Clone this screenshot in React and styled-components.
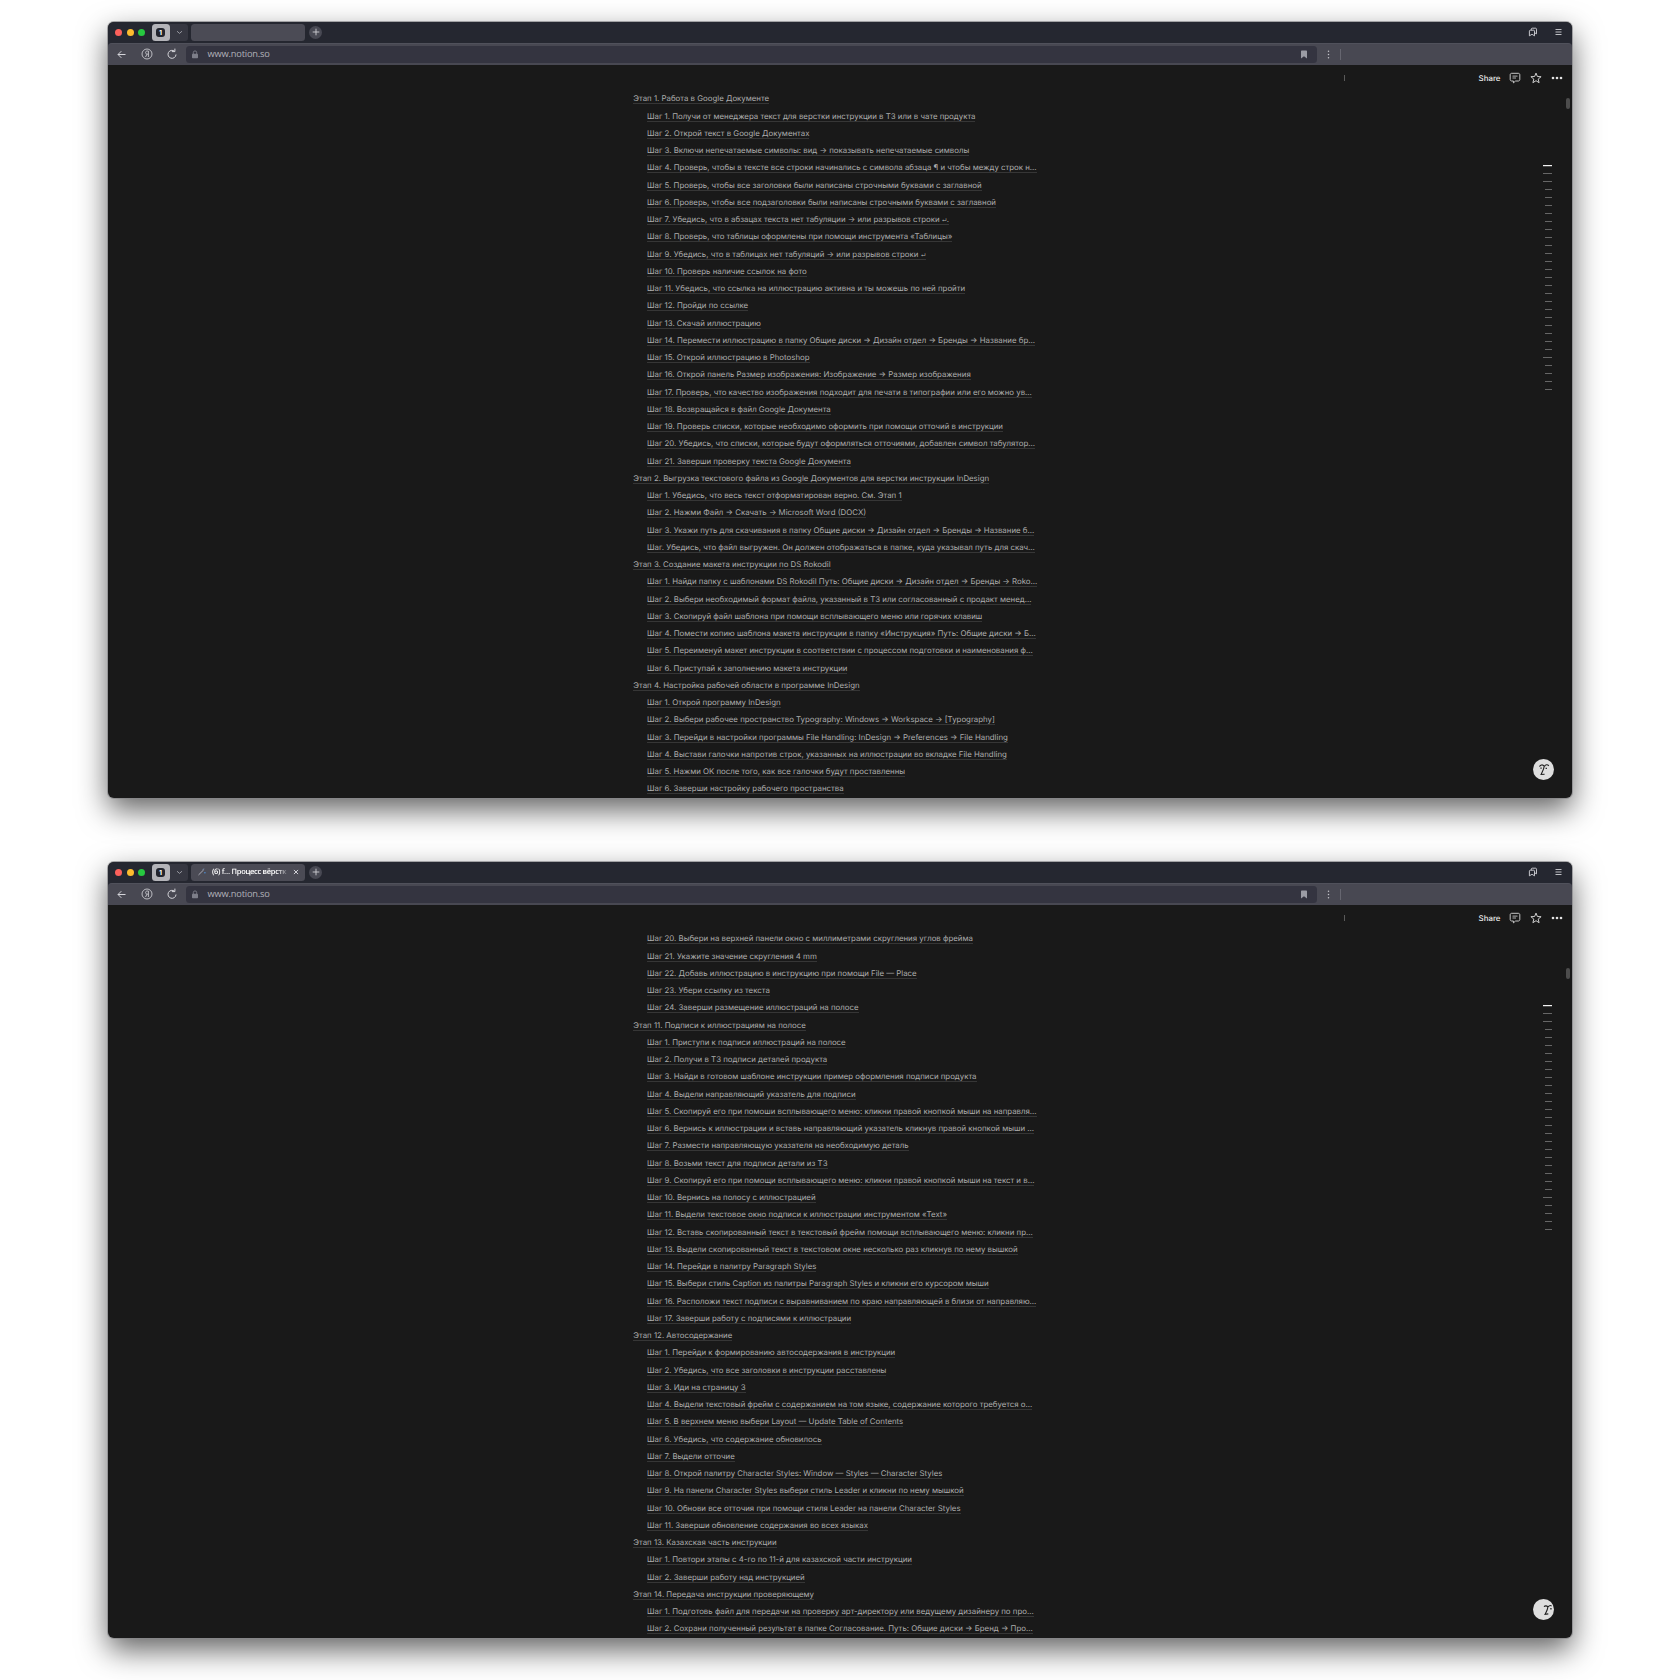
import styled, { createGlobalStyle } from 'styled-components';

const GlobalStyle = createGlobalStyle`
  *,
  *::before,
  *::after {
    box-sizing: border-box;
  }

  html,
  body {
    margin: 0;
    background-color: #fff;
  }

  svg {
    display: block;
  }
`;

const Page = styled.main`
  display: flex;
  flex-direction: column;
  align-items: center;
  gap: 64px;
  width: 1680px;
  height: 1680px;
  padding-top: 22px;
  overflow: hidden;
  font-family: Inter, 'Liberation Sans', sans-serif;
  text-rendering: geometricPrecision;
`;

const Window = styled.article`
  position: relative;
  flex: none;
  display: flex;
  flex-direction: column;
  width: 1464px;
  height: 776px;
  border-radius: 6px;
  background-color: #191919;
  box-shadow: 0 0 0 1px rgba(135, 135, 138, 0.7),
    0 12px 30px rgba(0, 0, 0, 0.62);
`;

const TabBar = styled.header`
  display: flex;
  align-items: center;
  height: 20.5px;
  padding: 0 10px 0 7px;
  border-radius: 6px 6px 0 0;
  background-color: #252730;
`;

const Lights = styled.div`
  display: flex;
  gap: 4.5px;
`;

const Light = styled.span`
  width: 7px;
  height: 7px;
  border-radius: 50%;
  background-color: ${(props) => props.$color};
`;

const Group = styled.div`
  display: flex;
  align-items: center;
  width: 36px;
  height: 17px;
  margin-left: 6.5px;
  border-radius: 3px;
  background-color: #363741;
`;

const GroupBadge = styled.div`
  display: grid;
  place-items: center;
  width: 18px;
  height: 17px;
  margin-right: 6px;
  border-radius: 3.5px;
  background-color: #b4b4b9;
`;

const GroupCount = styled.span`
  display: grid;
  place-items: center;
  width: 9.5px;
  height: 9.5px;
  border-radius: 3px;
  background-color: #23252e;
  color: #fff;
  font: 700 7px/9px Inter, sans-serif;
`;

const Tab = styled.div`
  display: flex;
  align-items: center;
  width: 114px;
  height: 16.5px;
  margin-left: 3.5px;
  padding: 0 6px 0 7px;
  border-radius: 3.5px;
  background-color: #4b4b55;
`;

const TabTitle = styled.span`
  width: 79px;
  margin: 0 3px 0 6px;
  white-space: nowrap;
  color: #fff;
  font: 600 7.5px/14px 'Open Sans', sans-serif;
  letter-spacing: -0.3px;
  mask-image: linear-gradient(to right, #000 84%, transparent 99%);
`;

const NewTab = styled.div`
  display: grid;
  place-items: center;
  width: 13px;
  height: 13px;
  margin-left: 4px;
  border-radius: 50%;
  background-color: #484953;
`;

const TabBarTools = styled.div`
  display: flex;
  align-items: center;
  gap: 17px;
  margin-left: auto;
`;

const Toolbar = styled.div`
  display: flex;
  align-items: center;
  height: 22.5px;
  padding-left: 8px;
  border-top: 1px solid #50515b;
  border-radius: 4px 4px 0 0;
  background-color: #484852;
`;

const ToolbarWrap = styled.div`
  background-color: #252730;
`;

const NavButtons = styled.div`
  display: flex;
  align-items: center;
  gap: 13.5px;
  width: 70px;
`;

const Address = styled.div`
  display: flex;
  align-items: center;
  width: 1131px;
  height: 17.5px;
  padding: 0 9px 0 5px;
  border-radius: 3.5px;
  background-color: #343440;
`;

const Url = styled.span`
  margin-left: 8.5px;
  color: #b2b3ba;
  font: 400 9.3px/16px 'Open Sans', sans-serif;
  letter-spacing: -0.2px;
`;

const Bookmark = styled.div`
  margin-left: auto;
`;

const MenuDots = styled.div`
  display: flex;
  align-items: center;
  gap: 10px;
  margin-left: 10px;
`;

const Rule = styled.span`
  width: 1px;
  height: ${(props) => props.$height}px;
  background-color: ${(props) => props.$color};
`;

const Content = styled.section`
  flex: 1;
  min-height: 0;
  overflow: hidden;
  border-radius: 0 0 6px 6px;
`;

const PageBar = styled.div`
  display: flex;
  align-items: center;
  height: 25.2px;
  padding-right: 9.5px;
`;

const PageBarRule = styled.div`
  margin-left: 1236px;
`;

const PageActions = styled.div`
  display: flex;
  align-items: center;
  gap: 8.7px;
  margin-left: auto;
`;

const Share = styled.span`
  color: #e8e8e8;
  font-size: 7.9px;
  font-weight: 500;
  line-height: 12px;
`;

const Contents = styled.ul`
  width: 406px;
  margin: 0 0 0 525.3px;
  padding: 0;
  list-style: none;
`;

const Item = styled.li`
  display: flex;
  align-items: center;
  height: 17.26px;
  padding-left: ${(props) => (props.$level === 1 ? 0 : 13.7)}px;
`;

const ItemText = styled.span`
  height: 11px;
  border-bottom: 1px solid #363636;
  white-space: nowrap;
  color: #adadad;
  font-size: 7.85px;
  line-height: 10px;
`;

const Return = styled.span`
  font-size: 5px;
  font-weight: 600;
  line-height: 0;
`;

const Scrollbar = styled.span`
  position: absolute;
  top: ${(props) => props.$top}px;
  right: 2px;
  width: 4px;
  height: 11px;
  border-radius: 2px;
  background-color: #4d4d4d;
`;

const Outline = styled.div`
  position: absolute;
  top: 143px;
  right: 20px;
  display: flex;
  flex-direction: column;
  align-items: flex-end;
  gap: 7px;
`;

const OutlineMark = styled.span`
  width: ${(props) => (props.$wide ? 9.5 : 7)}px;
  height: 1px;
  background-color: ${(props) => (props.$active ? '#f2f2f2' : '#666')};
  box-shadow: ${(props) =>
    props.$active ? '0 0.5px 0 rgba(242, 242, 242, 0.45)' : 'none'};
`;

const Assistant = styled.div`
  position: absolute;
  right: 18px;
  bottom: 18px;
  display: grid;
  place-items: center;
  width: 21px;
  height: 21px;
  border-radius: 50%;
  background-color: #dedede;
`;

const firstPage = [
  'Этап 1. Работа в Google Документе',
  'Шаг 1. Получи от менеджера текст для верстки инструкции в ТЗ или в чате продукта',
  'Шаг 2. Открой текст в Google Документах',
  'Шаг 3. Включи непечатаемые символы: вид → показывать непечатаемые символы',
  'Шаг 4. Проверь, чтобы в тексте все строки начинались с символа абзаца ¶ и чтобы между строк н…',
  'Шаг 5. Проверь, чтобы все заголовки были написаны строчными буквами с заглавной',
  'Шаг 6. Проверь, чтобы все подзаголовки были написаны строчными буквами с заглавной',
  'Шаг 7. Убедись, что в абзацах текста нет табуляции → или разрывов строки ↵.',
  'Шаг 8. Проверь, что таблицы оформлены при помощи инструмента «Таблицы»',
  'Шаг 9. Убедись, что в таблицах нет табуляций → или разрывов строки ↵',
  'Шаг 10. Проверь наличие ссылок на фото',
  'Шаг 11. Убедись, что ссылка на иллюстрацию активна и ты можешь по ней пройти',
  'Шаг 12. Пройди по ссылке',
  'Шаг 13. Скачай иллюстрацию',
  'Шаг 14. Перемести иллюстрацию в папку Общие диски → Дизайн отдел → Бренды → Название бр…',
  'Шаг 15. Открой иллюстрацию в Photoshop',
  'Шаг 16. Открой панель Размер изображения: Изображение → Размер изображения',
  'Шаг 17. Проверь, что качество изображения подходит для печати в типографии или его можно ув…',
  'Шаг 18. Возвращайся в файл Google Документа',
  'Шаг 19. Проверь списки, которые необходимо оформить при помощи отточий в инструкции',
  'Шаг 20. Убедись, что списки, которые будут оформляться отточиями, добавлен символ табулятор…',
  'Шаг 21. Заверши проверку текста Google Документа',
  'Этап 2. Выгрузка текстового файла из Google Документов для верстки инструкции InDesign',
  'Шаг 1. Убедись, что весь текст отформатирован верно. См. Этап 1',
  'Шаг 2. Нажми Файл → Скачать → Microsoft Word (DOCX)',
  'Шаг 3. Укажи путь для скачивания в папку Общие диски → Дизайн отдел → Бренды → Название б…',
  'Шаг. Убедись, что файл выгружен. Он должен отображаться в папке, куда указывал путь для скач…',
  'Этап 3. Создание макета инструкции по DS Rokodil',
  'Шаг 1. Найди папку с шаблонами DS Rokodil Путь: Общие диски → Дизайн отдел → Бренды → Roko…',
  'Шаг 2. Выбери необходимый формат файла, указанный в ТЗ или согласованный с продакт менед…',
  'Шаг 3. Скопируй файл шаблона при помощи всплывающего меню или горячих клавиш',
  'Шаг 4. Помести копию шаблона макета инструкции в папку «Инструкция» Путь: Общие диски → Б…',
  'Шаг 5. Переименуй макет инструкции в соответствии с процессом подготовки и наименования ф…',
  'Шаг 6. Приступай к заполнению макета инструкции',
  'Этап 4. Настройка рабочей области в программе InDesign',
  'Шаг 1. Открой программу InDesign',
  'Шаг 2. Выбери рабочее пространство Typography: Windows → Workspace → [Typography]',
  'Шаг 3. Перейди в настройки программы File Handling: InDesign → Preferences → File Handling',
  'Шаг 4. Выстави галочки напротив строк, указанных на иллюстрации во вкладке File Handling',
  'Шаг 5. Нажми ОК после того, как все галочки будут проставленны',
  'Шаг 6. Заверши настройку рабочего пространства',
];

const secondPage = [
  'Шаг 20. Выбери на верхней панели окно с миллиметрами скругления углов фрейма',
  'Шаг 21. Укажите значение скругления 4 mm',
  'Шаг 22. Добавь иллюстрацию в инструкцию при помощи File — Place',
  'Шаг 23. Убери ссылку из текста',
  'Шаг 24. Заверши размещение иллюстраций на полосе',
  'Этап 11. Подписи к иллюстрациям на полосе',
  'Шаг 1. Приступи к подписи иллюстраций на полосе',
  'Шаг 2. Получи в ТЗ подписи деталей продукта',
  'Шаг 3. Найди в готовом шаблоне инструкции пример оформления подписи продукта',
  'Шаг 4. Выдели направляющий указатель для подписи',
  'Шаг 5. Скопируй его при помоши всплывающего меню: кликни правой кнопкой мыши на направля…',
  'Шаг 6. Вернись к иллюстрации и вставь направляющий указатель кликнув правой кнопкой мыши …',
  'Шаг 7. Размести направляющую указателя на необходимую деталь',
  'Шаг 8. Возьми текст для подписи детали из ТЗ',
  'Шаг 9. Скопируй его при помощи всплывающего меню: кликни правой кнопкой мыши на текст и в…',
  'Шаг 10. Вернись на полосу с иллюстрацией',
  'Шаг 11. Выдели текстовое окно подписи к иллюстрации инструментом «Text»',
  'Шаг 12. Вставь скопированный текст в текстовый фрейм помощи всплывающего меню: кликни пр…',
  'Шаг 13. Выдели скопированный текст в текстовом окне несколько раз кликнув по нему вышкой',
  'Шаг 14. Перейди в палитру Paragraph Styles',
  'Шаг 15. Выбери стиль Caption из палитры Paragraph Styles и кликни его курсором мыши',
  'Шаг 16. Расположи текст подписи с выравниванием по краю направляющей в близи от направляю…',
  'Шаг 17. Заверши работу с подписями к иллюстрации',
  'Этап 12. Автосодержание',
  'Шаг 1. Перейди к формированию автосодержания в инструкции',
  'Шаг 2. Убедись, что все заголовки в инструкции расставлены',
  'Шаг 3. Иди на страницу 3',
  'Шаг 4. Выдели текстовый фрейм с содержанием на том языке, содержание которого требуется о…',
  'Шаг 5. В верхнем меню выбери Layout — Update Table of Contents',
  'Шаг 6. Убедись, что содержание обновилось',
  'Шаг 7. Выдели отточие',
  'Шаг 8. Открой палитру Character Styles: Window — Styles — Character Styles',
  'Шаг 9. На панели Character Styles выбери стиль Leader и кликни по нему мышкой',
  'Шаг 10. Обнови все отточия при помощи стиля Leader на панели Character Styles',
  'Шаг 11. Заверши обновление содержания во всех языках',
  'Этап 13. Казахская часть инструкции',
  'Шаг 1. Повтори этапы с 4-го по 11-й для казахской части инструкции',
  'Шаг 2. Заверши работу над инструкцией',
  'Этап 14. Передача инструкции проверяющему',
  'Шаг 1. Подготовь файл для передачи на проверку арт-директору или ведущему дизайнеру по про…',
  'Шаг 2. Сохрани полученный результат в папке Согласование. Путь: Общие диски → Бренд → Про…',
];

const outlineMarks = Array.from({ length: 29 }, (_, i) => ({
  id: i,
  active: i === 0,
  wide: i < 3 || i === 24,
}));

function ChevronIcon() {
  return (
    <svg width="7" height="5" viewBox="0 0 7 5" fill="none" stroke="#a0a1a9">
      <path d="M1 1.2l2.5 2.2L6 1.2" strokeWidth="0.9" />
    </svg>
  );
}

function PlusIcon() {
  return (
    <svg width="8" height="8" viewBox="0 0 8 8" stroke="#cfcfd4">
      <path d="M4 .7v6.6M.7 4h6.6" strokeWidth="0.9" />
    </svg>
  );
}

function CloseIcon() {
  return (
    <svg width="6" height="6" viewBox="0 0 6 6" stroke="#e4e4e8">
      <path d="M.9.9l4.2 4.2M5.1.9L.9 5.1" strokeWidth="0.9" />
    </svg>
  );
}

function PenIcon() {
  return (
    <svg width="8" height="8" viewBox="0 0 8 8" fill="none">
      <path d="M.5 7L5.8 1.8" stroke="#b9b9c2" strokeWidth="0.9" />
      <path d="M4.6 1.4l1.8-.5" stroke="#7d94b5" strokeWidth="0.8" />
      <circle cx="7" cy="4.8" r="0.8" fill="#4c8fd6" />
    </svg>
  );
}

function CollectionsIcon() {
  return (
    <svg width="10" height="10" viewBox="0 0 10 10" fill="none" stroke="#d7d7dc">
      <path
        d="M3.3 3.2v-1c0-.6.4-1 1-1h3.2c.6 0 1 .4 1 1v4.6l-1.700-.9"
        strokeWidth="0.9"
        strokeLinejoin="round"
      />
      <path
        d="M2.3 3.2h3.3c.5 0 .9.4.9.9v4.7L4 7.3 1.4 8.8V4.1c0-.5.4-.9.9-.9z"
        strokeWidth="0.9"
        strokeLinejoin="round"
      />
    </svg>
  );
}

function HamburgerIcon() {
  return (
    <svg width="7" height="8" viewBox="0 0 7 8" stroke="#d0d0d5">
      <path d="M.5 1.5h6M.5 4h6M.5 6.5h6" strokeWidth="0.9" />
    </svg>
  );
}

function BackIcon() {
  return (
    <svg width="11" height="11" viewBox="0 0 11 11" fill="none" stroke="#d5d5da">
      <path d="M9.5 5.5H2M5.3 2.2L2 5.5l3.3 3.3" />
    </svg>
  );
}

function YandexIcon() {
  return (
    <svg width="12" height="12" viewBox="0 0 12 12" fill="none" stroke="#c8c8ce">
      <circle cx="6" cy="6" r="5" strokeWidth="0.9" />
      <path
        d="M7.4 9V3H6.2C5.2 3 4.6 3.6 4.6 4.6s.6 1.5 1.6 1.5h1.2M6 6.2L4.5 9"
        strokeWidth="0.9"
      />
    </svg>
  );
}

function ReloadIcon() {
  return (
    <svg width="12" height="12" viewBox="0 0 12 12" fill="none" stroke="#d5d5da">
      <path d="M8.6 3.3A4 4 0 1 0 10 6.5M5.8 3.6h3.1v-3" strokeWidth="1" />
    </svg>
  );
}

function LockIcon() {
  return (
    <svg width="8" height="9" viewBox="0 0 8 9">
      <rect x="1" y="3.7" width="6" height="4.6" rx="0.8" fill="#7d7e89" />
      <path
        d="M2.3 4V2.6a1.7 1.7 0 0 1 3.4 0V4"
        fill="none"
        stroke="#7d7e89"
        strokeWidth="0.9"
      />
    </svg>
  );
}

function BookmarkIcon() {
  return (
    <svg width="8" height="9" viewBox="0 0 8 9">
      <path
        d="M1 1.2C1 .8 1.3.5 1.7.5h4.6c.4 0 .7.3.7.7v7.3L4 6.3 1 8.5z"
        fill="#9b9ca5"
      />
    </svg>
  );
}

function DotsVerticalIcon() {
  return (
    <svg width="3" height="9" viewBox="0 0 3 9" fill="#c4c4ca">
      <circle cx="1.5" cy="1.2" r="0.75" />
      <circle cx="1.5" cy="4.5" r="0.75" />
      <circle cx="1.5" cy="7.8" r="0.75" />
    </svg>
  );
}

function CommentIcon() {
  return (
    <svg width="12" height="12" viewBox="0 0 12 12" fill="none" stroke="#d8d8d8">
      <path
        d="M2.7 1.3h6.6c.9 0 1.5.6 1.5 1.5v4.7c0 .9-.6 1.5-1.5 1.5H6.6l-2.2 1.900V9H2.7c-.9 0-1.5-.6-1.5-1.5V2.8c0-.9.6-1.5 1.5-1.5z"
        strokeWidth="0.9"
        strokeLinejoin="round"
      />
      <path d="M3.5 4.1h5M3.5 6H7" strokeWidth="0.8" />
    </svg>
  );
}

function StarIcon() {
  return (
    <svg width="12" height="12" viewBox="0 0 12 12" fill="none" stroke="#d8d8d8">
      <path
        d="M6 1.1l1.4 3.4 3.7.2-2.900 2.4.9 3.6L6 8.7l-3.1 2 .9-3.600L.9 4.7l3.7-.2z"
        strokeWidth="0.95"
        strokeLinejoin="round"
      />
    </svg>
  );
}

function MoreIcon() {
  return (
    <svg width="12" height="4" viewBox="0 0 12 4" fill="#e4e4e4">
      <circle cx="2" cy="2" r="1.3" />
      <circle cx="6" cy="2" r="1.3" />
      <circle cx="10" cy="2" r="1.3" />
    </svg>
  );
}

// The face turns to the right when the assistant looks away
function FaceIcon({ turned }) {
  if (turned) {
    return (
      <svg width="21" height="21" viewBox="0 0 21 21" fill="none" stroke="#1d1d1d">
        <path
          d="M11 7.600c1-1 2.800-1 3.800.2 0 2.300-1.200 4.800-2.800 7.600l3.300-.5M15.300 7.900c.7-1.200 2.200-1.600 3.300-1"
          strokeWidth="1.1"
        />
        <path d="M17.300 9.800h1.300" strokeWidth="1.4" />
      </svg>
    );
  }

  return (
    <svg width="21" height="21" viewBox="0 0 21 21" fill="none" stroke="#1d1d1d">
      <path
        d="M6.500 7.600c.8-2 3.300-2.300 4.700-.4-.2 2.700-1.600 5.200-3.100 8.300l3.500-.2M11.600 7.200c.9-1.700 3.100-1.900 4.200-.3"
        strokeWidth="1.1"
      />
      <path d="M7.400 9.200h1.300M12.600 9.300h1.300" strokeWidth="1.2" />
    </svg>
  );
}

function Browser({ title, items, scrollTop, turned }) {
  return (
    <Window>
      <TabBar>
        <Lights>
          <Light $color="#fc605b" />
          <Light $color="#fdbc2e" />
          <Light $color="#27c840" />
        </Lights>
        <Group>
          <GroupBadge>
            <GroupCount>1</GroupCount>
          </GroupBadge>
          <ChevronIcon />
        </Group>
        <Tab>
          {title && (
            <>
              <PenIcon />
              <TabTitle>{title}</TabTitle>
              <CloseIcon />
            </>
          )}
        </Tab>
        <NewTab>
          <PlusIcon />
        </NewTab>
        <TabBarTools>
          <CollectionsIcon />
          <HamburgerIcon />
        </TabBarTools>
      </TabBar>
      <ToolbarWrap>
        <Toolbar>
          <NavButtons>
            <BackIcon />
            <YandexIcon />
            <ReloadIcon />
          </NavButtons>
          <Address>
            <LockIcon />
            <Url>www.notion.so</Url>
            <Bookmark>
              <BookmarkIcon />
            </Bookmark>
          </Address>
          <MenuDots>
            <DotsVerticalIcon />
            <Rule $height={11} $color="#666670" />
          </MenuDots>
        </Toolbar>
      </ToolbarWrap>
      <Content>
        <PageBar>
          <PageBarRule>
            <Rule as="div" $height={6} $color="#5a5a5a" />
          </PageBarRule>
          <PageActions>
            <Share>Share</Share>
            <CommentIcon />
            <StarIcon />
            <MoreIcon />
          </PageActions>
        </PageBar>
        <Contents>
          {items.map((item) => {
            const [text, afterReturn] = item.split('↵');

            return (
              <Item key={item} $level={item.startsWith('Этап') ? 1 : 2}>
                <ItemText>
                  {text}
                  {afterReturn !== undefined && <Return>↵</Return>}
                  {afterReturn}
                </ItemText>
              </Item>
            );
          })}
        </Contents>
      </Content>
      <Scrollbar $top={scrollTop} />
      <Outline>
        {outlineMarks.map((mark) => (
          <OutlineMark key={mark.id} $wide={mark.wide} $active={mark.active} />
        ))}
      </Outline>
      <Assistant>
        <FaceIcon turned={turned} />
      </Assistant>
    </Window>
  );
}

function App() {
  return (
    <>
      <GlobalStyle />
      <Page>
        <Browser items={firstPage} scrollTop={76} />
        <Browser
          title="(6) f… Процесс вёрстк"
          items={secondPage}
          scrollTop={106}
          turned
        />
      </Page>
    </>
  );
}

export default App;
